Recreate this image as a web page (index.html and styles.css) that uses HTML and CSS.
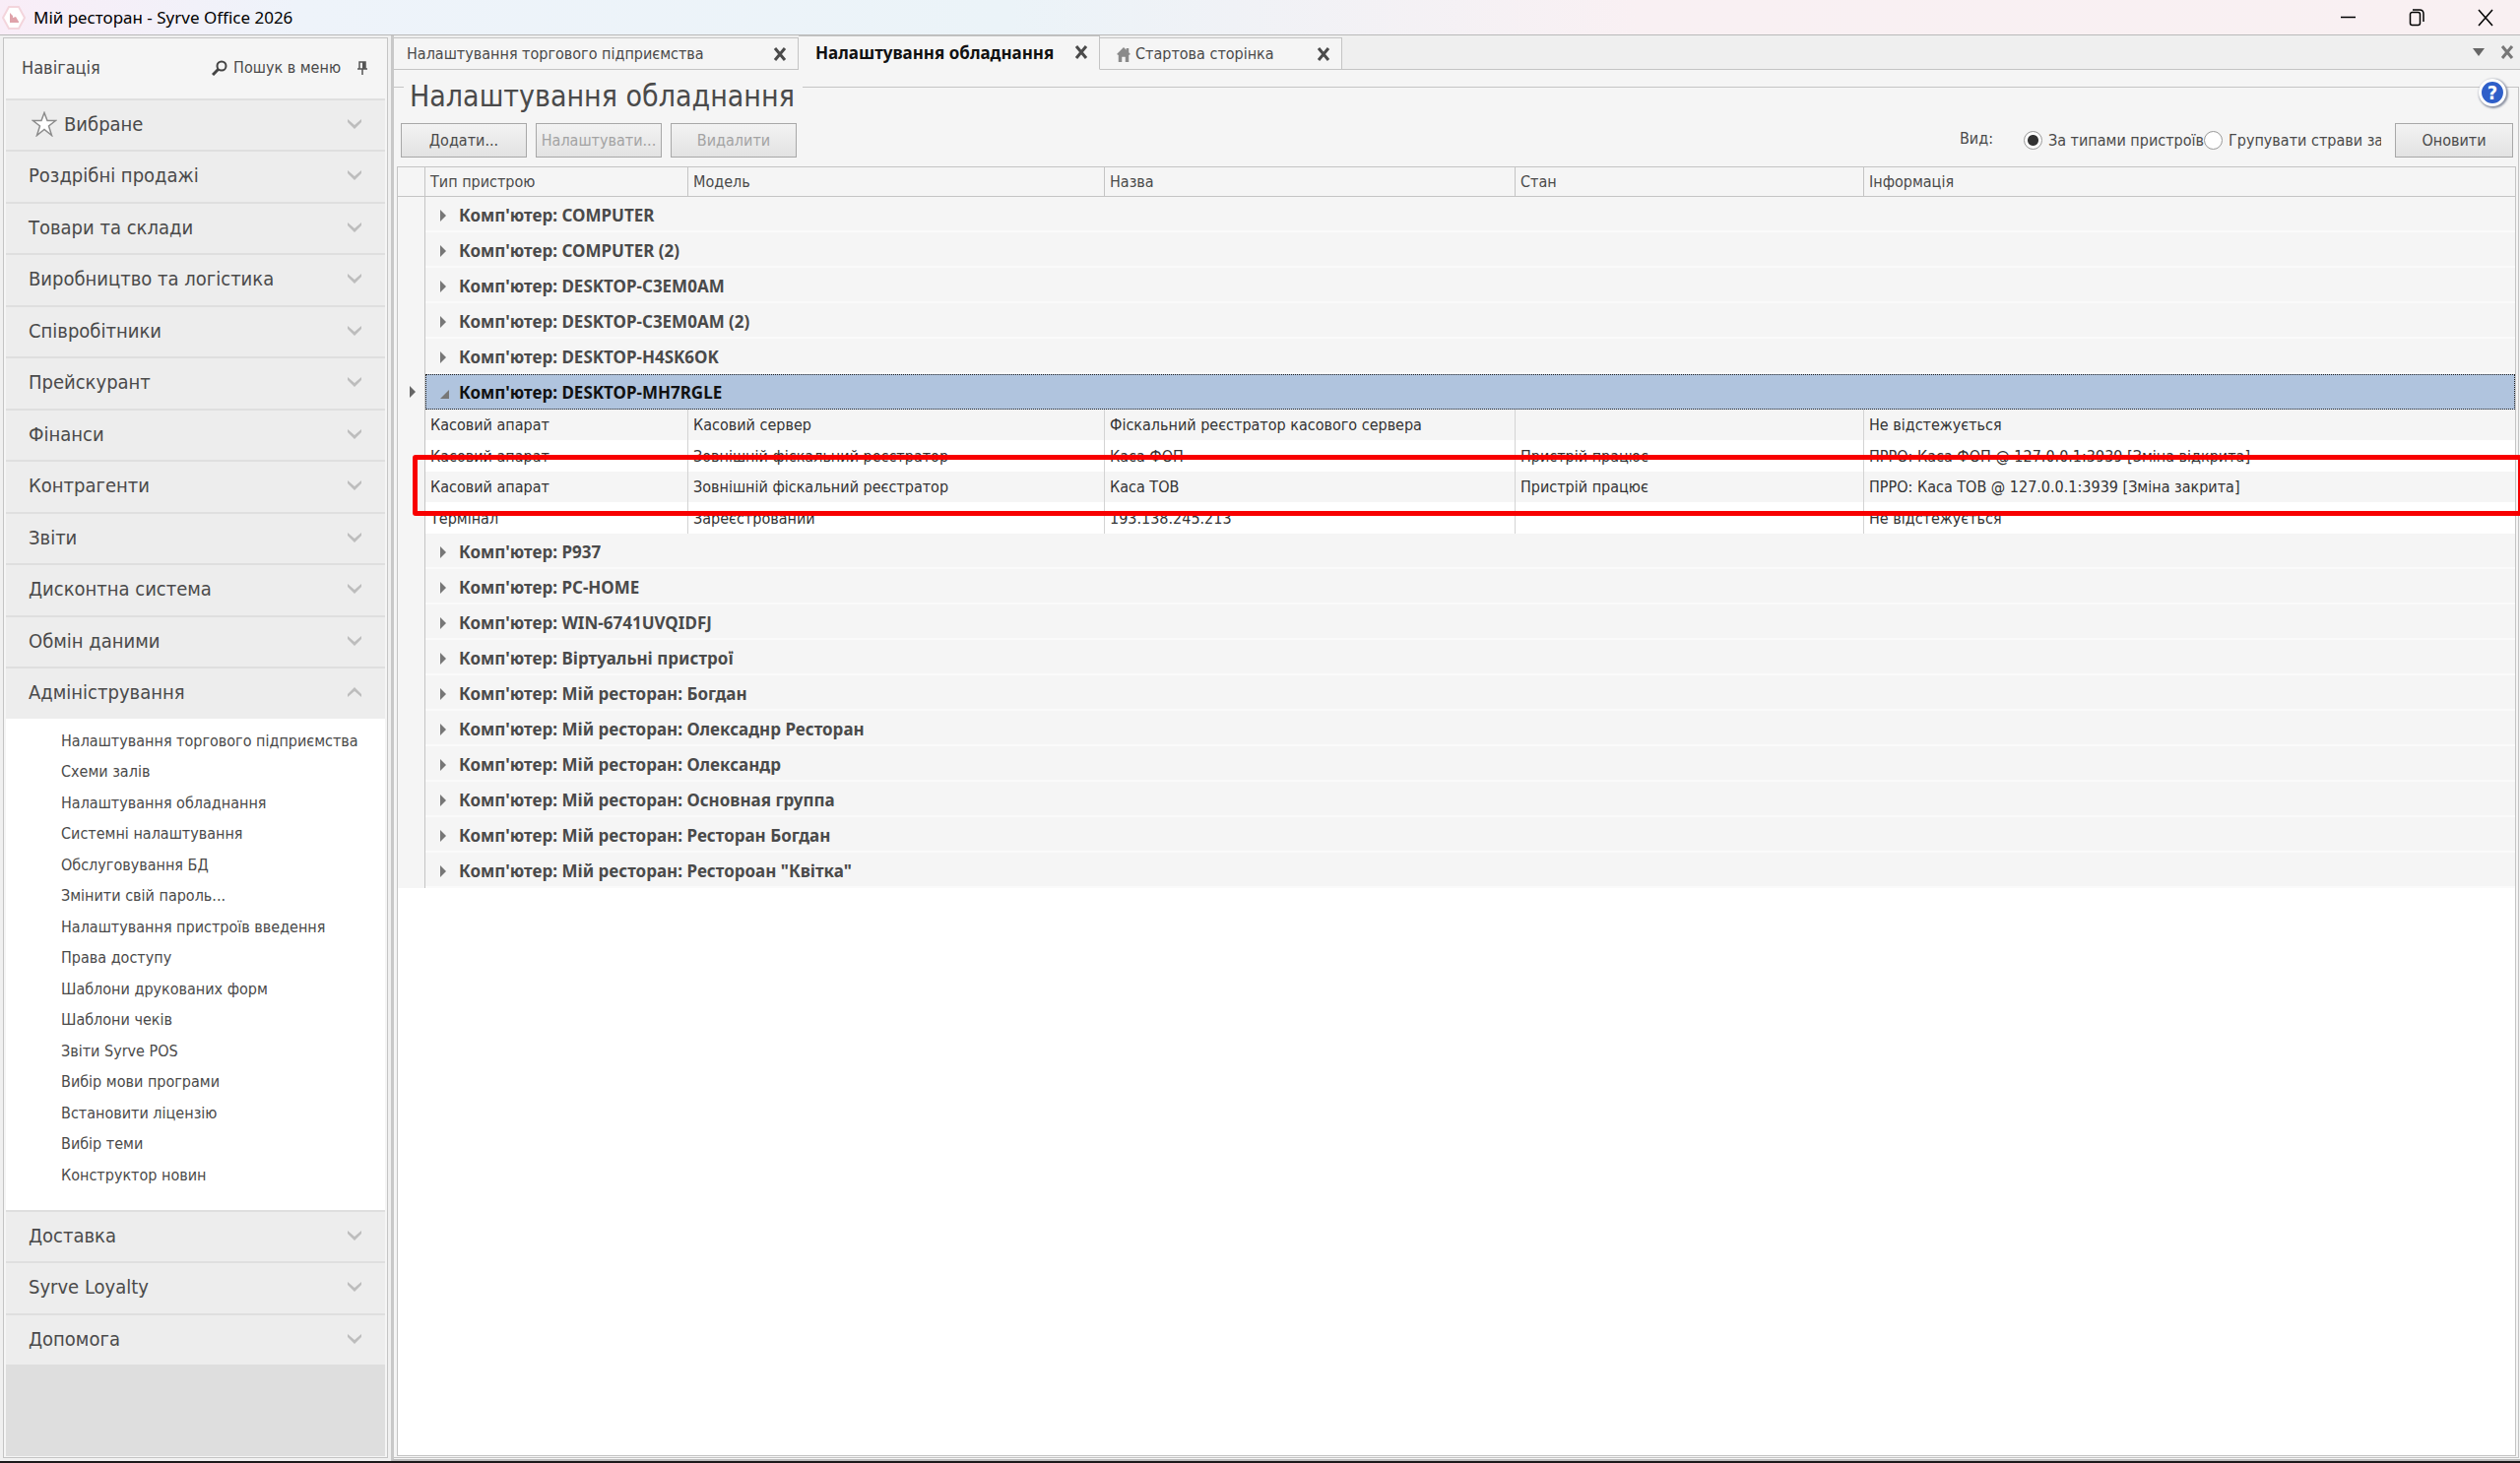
FILE: index.html
```html
<!DOCTYPE html>
<html lang="uk">
<head>
    <meta charset="UTF-8">
    <meta name="viewport" content="width=device-width, initial-scale=1.0">
    <title>Мій ресторан - Syrve Office 2026</title>
    <link rel="stylesheet" href="styles.css">
</head>
<body>
    <svg class="symbols" aria-hidden="true">
        <symbol id="chevron" viewBox="0 0 16 12"><path d="M1 1v3l7 7 7-7V1L8 7z" fill="#bdbdbd"/></symbol>
        <symbol id="cross" viewBox="0 0 14 14"><path d="M2 1l10 12M12 1L2 13" stroke="currentColor" stroke-width="3" fill="none"/></symbol>
    </svg>

    <header class="titlebar">
        <svg class="app-icon" viewBox="0 0 24 24">
            <path d="M7 1h10l6 11-6 11H7L1 12z" fill="#fff" stroke="#f3d5dc" stroke-width="2"/>
            <path d="M8 7l3 3v2l3-1 3 5v1H8z" fill="#dfa3aa"/>
        </svg>
        <span class="app-name">Мій ресторан - Syrve Office 2026</span>
        <div class="window-controls">
            <button type="button" aria-label="Згорнути"><svg viewBox="0 0 16 20"><path d="M1 9.500h15" stroke="#000" stroke-width="1.500"/></svg></button>
            <button type="button" aria-label="Відновити"><svg viewBox="0 0 16 20"><path d="M1.500 6.500a2 2 0 0 1 2-2h6a2 2 0 0 1 2 2v9a2 2 0 0 1-2 2h-6a2 2 0 0 1-2-2zM4 2h7q4 0 4 4v8" fill="none" stroke="#000" stroke-width="1.500"/></svg></button>
            <button type="button" aria-label="Закрити"><svg viewBox="0 0 16 20"><path d="M1 2l14 16M15 2L1 18" stroke="#000" stroke-width="1.500"/></svg></button>
        </div>
    </header>

    <div class="workspace">
        <aside class="sidebar">
            <div class="sidebar-header">
                <h2>Навігація</h2>
                <button type="button" class="search">
                    <svg viewBox="0 0 16 16"><circle cx="10" cy="6" r="4.500" fill="none" stroke="#444" stroke-width="2"/><path d="M7 9l-6 6" stroke="#444" stroke-width="3"/></svg>
                    Пошук в меню
                </button>
                <button type="button" class="pin" aria-label="Закріпити">
                    <svg viewBox="0 0 12 14"><path d="M3 1h6v7H3zM1 8h10M6 8v6" fill="none" stroke="#555" stroke-width="1.500"/><path d="M6 1h3v7H6z" fill="#555"/></svg>
                </button>
            </div>
            <nav>
                <div class="menu">
                    <button type="button"><svg class="star" viewBox="0 0 26 26"><path d="M13 1.500l3 8h8.500l-7 5.500 3 9.500-7.500-6-7.500 6 3-9.500-7-5.500H10z" fill="#fff" stroke="#8c8c8c" stroke-width="1.500"/></svg>Вибране<svg class="chevron"><use href="#chevron"/></svg></button>
                    <button type="button">Роздрібні продажі<svg class="chevron"><use href="#chevron"/></svg></button>
                    <button type="button">Товари та склади<svg class="chevron"><use href="#chevron"/></svg></button>
                    <button type="button">Виробництво та логістика<svg class="chevron"><use href="#chevron"/></svg></button>
                    <button type="button">Співробітники<svg class="chevron"><use href="#chevron"/></svg></button>
                    <button type="button">Прейскурант<svg class="chevron"><use href="#chevron"/></svg></button>
                    <button type="button">Фінанси<svg class="chevron"><use href="#chevron"/></svg></button>
                    <button type="button">Контрагенти<svg class="chevron"><use href="#chevron"/></svg></button>
                    <button type="button">Звіти<svg class="chevron"><use href="#chevron"/></svg></button>
                    <button type="button">Дисконтна система<svg class="chevron"><use href="#chevron"/></svg></button>
                    <button type="button">Обмін даними<svg class="chevron"><use href="#chevron"/></svg></button>
                    <button type="button" aria-expanded="true">Адміністрування<svg class="chevron"><use href="#chevron"/></svg></button>
                </div>
                <div class="submenu">
                    <a href="#">Налаштування торгового підприємства</a>
                    <a href="#">Схеми залів</a>
                    <a href="#">Налаштування обладнання</a>
                    <a href="#">Системні налаштування</a>
                    <a href="#">Обслуговування БД</a>
                    <a href="#">Змінити свій пароль...</a>
                    <a href="#">Налаштування пристроїв введення</a>
                    <a href="#">Права доступу</a>
                    <a href="#">Шаблони друкованих форм</a>
                    <a href="#">Шаблони чеків</a>
                    <a href="#">Звіти Syrve POS</a>
                    <a href="#">Вибір мови програми</a>
                    <a href="#">Встановити ліцензію</a>
                    <a href="#">Вибір теми</a>
                    <a href="#">Конструктор новин</a>
                </div>
                <div class="menu">
                    <button type="button">Доставка<svg class="chevron"><use href="#chevron"/></svg></button>
                    <button type="button">Syrve Loyalty<svg class="chevron"><use href="#chevron"/></svg></button>
                    <button type="button">Допомога<svg class="chevron"><use href="#chevron"/></svg></button>
                </div>
            </nav>
        </aside>

        <main>
            <div class="tabs">
                <div class="tab tab-wide"><a href="#">Налаштування торгового підприємства</a><button type="button" aria-label="Закрити"><svg><use href="#cross"/></svg></button></div>
                <div class="tab active"><a href="#">Налаштування обладнання</a><button type="button" aria-label="Закрити"><svg><use href="#cross"/></svg></button></div>
                <div class="tab tab-home"><svg class="home" viewBox="0 0 16 18"><path d="M0 9l8-8 3 3V2h3v5l2 2-2 1v8h-4v-6H6v6H2v-8z" fill="#8a8a8a"/></svg><a href="#">Стартова сторінка</a><button type="button" aria-label="Закрити"><svg><use href="#cross"/></svg></button></div>
                <div class="tab-tools">
                    <button type="button" aria-label="Список вкладок"><svg class="caret" viewBox="0 0 12 8"><path d="M0 0h12L6 8z" fill="#666"/></svg></button>
                    <button type="button" aria-label="Закрити"><svg><use href="#cross"/></svg></button>
                </div>
            </div>

            <section class="panel">
                <h1>Налаштування обладнання</h1>
                <button type="button" class="help" aria-label="Довідка">?</button>
                <div class="toolbar">
                    <button type="button" class="btn">Додати...</button>
                    <button type="button" class="btn" disabled>Налаштувати...</button>
                    <button type="button" class="btn" disabled>Видалити</button>
                    <div class="view" role="radiogroup" aria-labelledby="viewLabel">
                        <span id="viewLabel">Вид:</span>
                        <input type="radio" name="view" id="byType" checked><label for="byType">За типами пристроїв</label>
                        <input type="radio" name="view" id="byGroup"><label for="byGroup" class="clipped">Групувати страви за</label>
                    </div>
                    <button type="button" class="btn refresh">Оновити</button>
                </div>

                <div class="grid">
                    <table>
                        <colgroup>
                            <col class="col-mark"><col class="col-type"><col class="col-model"><col class="col-name"><col class="col-state"><col>
                        </colgroup>
                        <thead>
                            <tr><th></th><th>Тип пристрою</th><th>Модель</th><th>Назва</th><th>Стан</th><th>Інформація</th></tr>
                        </thead>
                        <tbody>
                            <tr class="group"><td></td><td colspan="5">Комп'ютер: COMPUTER</td></tr>
                            <tr class="group"><td></td><td colspan="5">Комп'ютер: COMPUTER (2)</td></tr>
                            <tr class="group"><td></td><td colspan="5">Комп'ютер: DESKTOP-C3EM0AM</td></tr>
                            <tr class="group"><td></td><td colspan="5">Комп'ютер: DESKTOP-C3EM0AM (2)</td></tr>
                            <tr class="group"><td></td><td colspan="5">Комп'ютер: DESKTOP-H4SK6OK</td></tr>
                            <tr class="group selected"><td></td><td colspan="5">Комп'ютер: DESKTOP-MH7RGLE</td></tr>
                            <tr class="device shaded"><td></td><td>Касовий апарат</td><td>Касовий сервер</td><td>Фіскальний реєстратор касового сервера</td><td></td><td>Не відстежується</td></tr>
                            <tr class="device"><td></td><td>Касовий апарат</td><td>Зовнішній фіскальний реєстратор</td><td>Каса ФОП</td><td>Пристрій працює</td><td>ПРРО: Каса ФОП @ 127.0.0.1:3939 [Зміна відкрита]</td></tr>
                            <tr class="device shaded marked"><td></td><td>Касовий апарат</td><td>Зовнішній фіскальний реєстратор</td><td>Каса ТОВ</td><td>Пристрій працює</td><td>ПРРО: Каса ТОВ @ 127.0.0.1:3939 [Зміна закрита]</td></tr>
                            <tr class="device"><td></td><td>Термінал</td><td>Зареєстрований</td><td>193.138.245.213</td><td></td><td>Не відстежується</td></tr>
                            <tr class="group"><td></td><td colspan="5">Комп'ютер: P937</td></tr>
                            <tr class="group"><td></td><td colspan="5">Комп'ютер: PC-HOME</td></tr>
                            <tr class="group"><td></td><td colspan="5">Комп'ютер: WIN-6741UVQIDFJ</td></tr>
                            <tr class="group"><td></td><td colspan="5">Комп'ютер: Віртуальні пристрої</td></tr>
                            <tr class="group"><td></td><td colspan="5">Комп'ютер: Мій ресторан: Богдан</td></tr>
                            <tr class="group"><td></td><td colspan="5">Комп'ютер: Мій ресторан: Олексаднр Ресторан</td></tr>
                            <tr class="group"><td></td><td colspan="5">Комп'ютер: Мій ресторан: Олександр</td></tr>
                            <tr class="group"><td></td><td colspan="5">Комп'ютер: Мій ресторан: Основная группа</td></tr>
                            <tr class="group"><td></td><td colspan="5">Комп'ютер: Мій ресторан: Ресторан Богдан</td></tr>
                            <tr class="group"><td></td><td colspan="5">Комп'ютер: Мій ресторан: Рестороан "Квітка"</td></tr>
                        </tbody>
                    </table>
                </div>
            </section>
        </main>
    </div>
</body>
</html>
```
FILE: styles.css
```css
* {
    box-sizing: border-box;
}
body {
    margin: 0;
    height: 100vh;
    display: flex;
    flex-direction: column;
    overflow: hidden;
    font-family: "DejaVu Sans Condensed", "DejaVu Sans", sans-serif;
    font-size: 16px;
    color: #4a4a4a;
    background-color: #f0f0f0;
    border-bottom: 2px solid #1c191a;
}
button {
    font: inherit;
    color: inherit;
    background: none;
    border: none;
    padding: 0;
}
a {
    color: inherit;
    text-decoration: none;
}
.symbols {
    display: none;
}

/* Title bar */
.titlebar {
    display: flex;
    align-items: center;
    height: 36px;
    flex-shrink: 0;
    padding-left: 2px;
    background: linear-gradient(90deg, #f9edf7 0, #eef3fa 300px, #ebf3f8 40%, #f9f0f3 65%, #f9f0f2 100%);
    border-bottom: 1px solid #b9b9b9;
}
.app-icon {
    width: 24px;
    height: 24px;
}
.app-name {
    margin-left: 8px;
    font-family: "Noto Sans", sans-serif;
    font-size: 17px;
    color: #000;
}
.window-controls {
    display: flex;
    gap: 54px;
    margin-left: auto;
    padding-right: 27px;
}
.window-controls svg {
    display: block;
    width: 16px;
    height: 20px;
}

.workspace {
    flex: 1;
    display: flex;
    min-height: 0;
}

/* Navigation */
.sidebar {
    display: flex;
    flex-direction: column;
    width: 391px;
    flex-shrink: 0;
    margin: 2px 3px 3px;
    padding: 0 2px 1px;
    background-color: #f5f5f5;
    border: 1px solid #c4c4c4;
}
.sidebar-header {
    display: flex;
    align-items: center;
    height: 61px;
    flex-shrink: 0;
    padding: 0 17px 2px 16px;
}
.sidebar-header h2 {
    margin: 0;
    font-size: 18px;
    font-weight: normal;
}
.search {
    display: flex;
    align-items: center;
    gap: 6px;
    margin-left: auto;
}
.search svg {
    width: 16px;
    height: 16px;
}
.pin {
    margin-left: 16px;
}
.pin svg {
    display: block;
    width: 12px;
    height: 14px;
}
nav {
    flex: 1;
    background-color: #dedede;
}
.menu button {
    display: flex;
    align-items: center;
    width: 100%;
    height: 52px;
    padding: 0 23px 3px;
    font-size: 20px;
    background-color: #ededed;
    border-top: 2px solid #dfdfdf;
}
.menu button:nth-child(even) {
    height: 53px;
}
.star {
    width: 26px;
    height: 26px;
    margin: 0 7px 0 3px;
}
.chevron {
    width: 16px;
    height: 12px;
    margin-left: auto;
}
.menu button[aria-expanded="true"] .chevron {
    transform: rotate(180deg);
}
.submenu {
    padding: 7px 0 20px;
    background-color: #fff;
}
.submenu a {
    display: block;
    padding-left: 56px;
    line-height: 31px;
}
.submenu a:nth-child(even) {
    line-height: 32px;
}

/* Tabs */
main {
    flex: 1;
    display: flex;
    flex-direction: column;
    min-width: 0;
    background-color: #f5f5f5;
    border-left: 3px solid #c8c8c8;
    border-bottom: 2px solid #bdbdbd;
}
.tabs {
    display: flex;
    align-items: flex-end;
    height: 35px;
    flex-shrink: 0;
    background-color: #efefef;
}
.tab {
    display: flex;
    align-items: center;
    height: 33px;
    padding: 0 11px 0 13px;
    background-color: #f5f5f5;
    border: 1px solid #c4c4c4;
    border-left: none;
}
.tab svg {
    display: block;
    width: 14px;
    height: 14px;
}
.tab button {
    margin-left: auto;
}
.tab-wide {
    width: 411px;
}
.tab.active {
    width: 306px;
    height: 35px;
    padding-left: 17px;
    padding-bottom: 1px;
    font-family: "Noto Sans", sans-serif;
    font-size: 17px;
    font-weight: bold;
    color: #111;
    border-bottom-color: #f5f5f5;
}
.tab.active button {
    color: #4a4a4a;
}
.tab-home {
    width: 246px;
    padding-left: 17px;
}
.tab .home {
    width: 14px;
    height: 16px;
    margin-right: 5px;
}
.tab-tools {
    flex: 1;
    display: flex;
    align-items: center;
    justify-content: flex-end;
    gap: 16px;
    height: 33px;
    padding: 0 6px 2px 0;
    color: #777;
    border-bottom: 1px solid #c4c4c4;
}
.tab-tools svg {
    display: block;
    width: 14px;
    height: 14px;
}
.tab-tools .caret {
    width: 12px;
    height: 8px;
}

/* Equipment panel */
.panel {
    position: relative;
    flex: 1;
    display: flex;
    flex-direction: column;
    min-height: 0;
    margin: 17px 1px 1px 0;
    padding: 0 2px 1px 3px;
    border: 1px solid #c4c4c4;
    border-left: none;
}
h1 {
    align-self: flex-start;
    margin: -9px 0 0 7px;
    padding: 0 8px 0 6px;
    font-size: 30px;
    font-weight: normal;
    line-height: 36px;
    background-color: #f5f5f5;
}
.help {
    position: absolute;
    top: -9px;
    right: 12px;
    width: 28px;
    height: 28px;
    border: 3px solid #fff;
    border-radius: 50%;
    background-color: #2f5fc9;
    box-shadow: 1px 1px 2px 1px #8d93a3;
    color: #fff;
    font-size: 20px;
    font-weight: bold;
    line-height: 22px;
}
.toolbar {
    display: flex;
    align-items: center;
    gap: 9px;
    margin: 9px 3px 9px 4px;
}
.btn {
    width: 128px;
    height: 35px;
    white-space: nowrap;
    background: linear-gradient(#f3f3f3, #e2e2e2);
    border: 1px solid #a8a8a8;
}
.btn:disabled {
    color: #a3a3a3;
}
.refresh {
    width: 120px;
}
.view {
    display: flex;
    align-items: center;
    margin-left: auto;
    margin-right: 5px;
}
.view span {
    margin-right: 31px;
    padding-bottom: 4px;
}
.view input {
    appearance: none;
    width: 19px;
    height: 19px;
    margin: 0 6px 0 0;
    border: 1px solid #999;
    border-radius: 50%;
    background-color: #fff;
}
.view input:checked {
    background: radial-gradient(circle, #333 5px, #fff 6px);
}
.clipped {
    width: 155px;
    overflow: hidden;
    white-space: nowrap;
}

/* Device table */
.grid {
    flex: 1;
    min-height: 0;
    background-color: #fff;
    border: 1px solid #c4c4c4;
}
table {
    width: 100%;
    table-layout: fixed;
    border-collapse: separate;
    border-spacing: 0;
}
.col-mark {
    width: 28px;
}
.col-type {
    width: 267px;
}
.col-model {
    width: 423px;
}
.col-name {
    width: 417px;
}
.col-state {
    width: 354px;
}
th,
td {
    padding: 0 5px;
    text-align: left;
    white-space: nowrap;
    border-right: 1px solid #d3d3d3;
}
th {
    height: 30px;
    font-weight: normal;
    background-color: #f5f5f5;
    border-right-color: #c4c4c4;
    border-bottom: 1px solid #c4c4c4;
}
th:last-child,
td:last-child {
    border-right: none;
}
td:first-child {
    background-color: #f5f5f5;
    border-right-color: #c4c4c4;
}
.group td {
    height: 36px;
    background-color: #f5f5f5;
}
.group td:last-child {
    padding-top: 2px;
    padding-left: 15px;
    font-family: "Noto Sans", sans-serif;
    font-size: 17px;
    font-weight: bold;
    border-bottom: 2px solid #fafafa;
}
.group td:last-child::before {
    content: "";
    display: inline-block;
    margin-right: 13px;
    border: 6px solid transparent;
    border-left: 6px solid #777;
    border-right: none;
}
.group.selected td:last-child {
    padding-top: 0;
    padding-left: 14px;
    color: #111;
    background-color: #b0c4de;
    border: 1px dotted #222;
}
.group.selected td:last-child::before {
    margin-right: 10px;
    border: none;
    border-left: 9px solid transparent;
    border-bottom: 9px solid #777;
}
.group.selected td:first-child::before {
    content: "";
    display: block;
    margin-left: 7px;
    border: 6px solid transparent;
    border-left: 6px solid #666;
    border-right: none;
}
.device td {
    height: 31px;
    color: #333;
}
.device:nth-child(even) td {
    height: 32px;
}
.device.shaded td {
    background-color: #f5f5f5;
}

/* Red frame round the marked device */
.marked {
    position: relative;
}
.marked td:first-child::after {
    content: "";
    position: absolute;
    z-index: 1;
    top: -17px;
    bottom: -14px;
    left: 15px;
    right: -8px;
    border: 5px solid #f80000;
    border-radius: 3px;
}
```
